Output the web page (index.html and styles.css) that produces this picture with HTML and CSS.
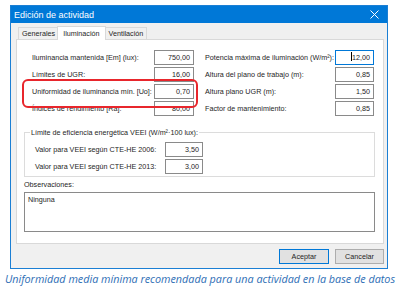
FILE: index.html
```html
<!DOCTYPE html>
<html>
<head>
<meta charset="utf-8">
<link rel="stylesheet" href="styles.css">
</head>
<body>
<div class="win">
  <div class="titlebar">
    <span class="title">Edición de actividad</span>
    <svg class="close" width="9" height="9" viewBox="0 0 9 9"><path d="M0.5 0.5L8.5 8.5M8.5 0.5L0.5 8.5" stroke="#fff" stroke-width="1"/></svg>
  </div>
  <div class="tabs">
    <span class="tab">Generales</span>
    <span class="tab active">Iluminación</span>
    <span class="tab">Ventilación</span>
  </div>
  <div class="page">
    <div class="grid">
      <div class="col left">
        <div class="row"><span class="lbl">Iluminancia mantenida [Em] (lux):</span><span class="inp">750,00</span></div>
        <div class="row"><span class="lbl">Límites de UGR:</span><span class="inp">16,00</span></div>
        <div class="row"><span class="lbl">Uniformidad de iluminancia mín. [Uo]:</span><span class="inp">0,70</span></div>
        <div class="row"><span class="lbl">Índices de rendimiento [Ra]:</span><span class="inp">80,00</span></div>
        <div class="highlight"></div>
      </div>
      <div class="col right">
        <div class="row"><span class="lbl">Potencia máxima de iluminación (W/m²):</span><span class="inp focus"><span class="caret"></span>12,00</span></div>
        <div class="row"><span class="lbl">Altura del plano de trabajo (m):</span><span class="inp">0,85</span></div>
        <div class="row"><span class="lbl">Altura plano UGR (m):</span><span class="inp">1,50</span></div>
        <div class="row"><span class="lbl">Factor de mantenimiento:</span><span class="inp">0,85</span></div>
      </div>
    </div>
    <fieldset class="group">
      <legend>Límite de eficiencia energética VEEI (W/m²·100 lux):</legend>
      <div class="grow"><span class="lbl">Valor para VEEI según CTE-HE 2006:</span><span class="inp">3,50</span></div>
      <div class="grow"><span class="lbl">Valor para VEEI según CTE-HE 2013:</span><span class="inp">3,00</span></div>
    </fieldset>
    <div class="obs-lbl">Observaciones:</div>
    <div class="textarea">Ninguna</div>
  </div>
  <div class="buttons">
    <span class="btn default">Aceptar</span>
    <span class="btn">Cancelar</span>
  </div>
</div>
<div class="caption">Uniformidad media mínima recomendada para una actividad en la base de datos</div>
</body>
</html>
```
FILE: styles.css
```css
* { box-sizing: border-box; }
body {
  margin: 0;
  background: #fff;
  font-family: "Liberation Sans", Arial, sans-serif;
  font-size: 7.2px;
  color: #1e1e1e;
  white-space: nowrap;
}
.win {
  margin: 5px 0 0 10px;
  width: 378px;
  height: 264px;
  border: 1px solid #1b7fd4;
  background: #f0f0f0;
  display: flex;
  flex-direction: column;
}
.titlebar {
  height: 17px;
  background: #0078d7;
  color: #fff;
  display: flex;
  align-items: center;
  justify-content: space-between;
  padding: 0 8px 0 3px;
  font-size: 9px;
}
.tabs {
  display: flex;
  align-items: flex-end;
  height: 15px;
  margin: 1px 0 0 7px;
}
.tab {
  height: 12px;
  padding: 0 3px;
  border: 1px solid #d9d9d9;
  border-bottom: none;
  background: #f0f0f0;
  display: flex;
  align-items: center;
  margin-right: -1px;
}
.tab.active {
  height: 14px;
  background: #fff;
  padding: 0 5px;
  margin: 0 -1px 0 -1px;
  position: relative;
  z-index: 1;
  top: 1px;
}
.page {
  margin: 0 3px 0 5px;
  height: 205px;
  background: #fff;
  border: 1px solid #d9d9d9;
  padding: 10px 0 0 7px;
}
.grid {
  display: flex;
  padding-left: 8px;
}
.col {
  display: flex;
  flex-direction: column;
  gap: 2px;
}
.col.left { width: 162px; position: relative; }
.col.right { width: 169px; margin-left: 11px; }
.row {
  display: flex;
  justify-content: space-between;
  align-items: center;
  height: 15px;
}
.lbl { flex: 0 1 auto; }
.inp {
  flex: 0 0 auto;
  height: 15px;
  border: 1px solid #8a8a8a;
  background: #fff;
  text-align: right;
  padding: 0 3px;
  line-height: 13px;
  width: 40px;
}
.right .inp { width: 39px; }
.inp.focus { border-color: #0078d7; }
.caret {
  display: inline-block;
  vertical-align: -1px;
  width: 1px;
  height: 9px;
  background: #000;
}
.highlight {
  position: absolute;
  left: -10px;
  top: 29px;
  width: 176px;
  height: 29px;
  border: 2px solid #e8262c;
  border-radius: 6px;
}
.group {
  margin: 12px 0 0 0;
  width: 351px;
  height: 49px;
  border: 1px solid #dcdcdc;
  padding: 5px 0 0 10px;
  display: flex;
  flex-direction: column;
  gap: 2px;
}
.group legend {
  padding: 0 1px;
  margin-left: -5px;
}
.grow {
  display: flex;
  justify-content: space-between;
  align-items: center;
  width: 168px;
  height: 15px;
}
.grow .inp { width: 38px; }
.obs-lbl {
  margin-top: 3px;
  height: 12px;
}
.textarea {
  width: 351px;
  height: 40px;
  border: 1px solid #8a8a8a;
  padding: 2px 3px;
}
.buttons {
  display: flex;
  justify-content: flex-end;
  gap: 6px;
  margin: 5px 3px 0 0;
}
.btn {
  height: 15px;
  border: 1px solid #adadad;
  background: #e1e1e1;
  display: flex;
  align-items: center;
  justify-content: center;
}
.btn.default { width: 50px; border-color: #0078d7; }
.btn:not(.default) { width: 49px; }
.caption {
  margin-top: 2px;
  text-align: center;
  font-family: "Open Sans", sans-serif;
  font-style: italic;
  font-size: 10.8px;
  color: #2e6eb5;
}
```
